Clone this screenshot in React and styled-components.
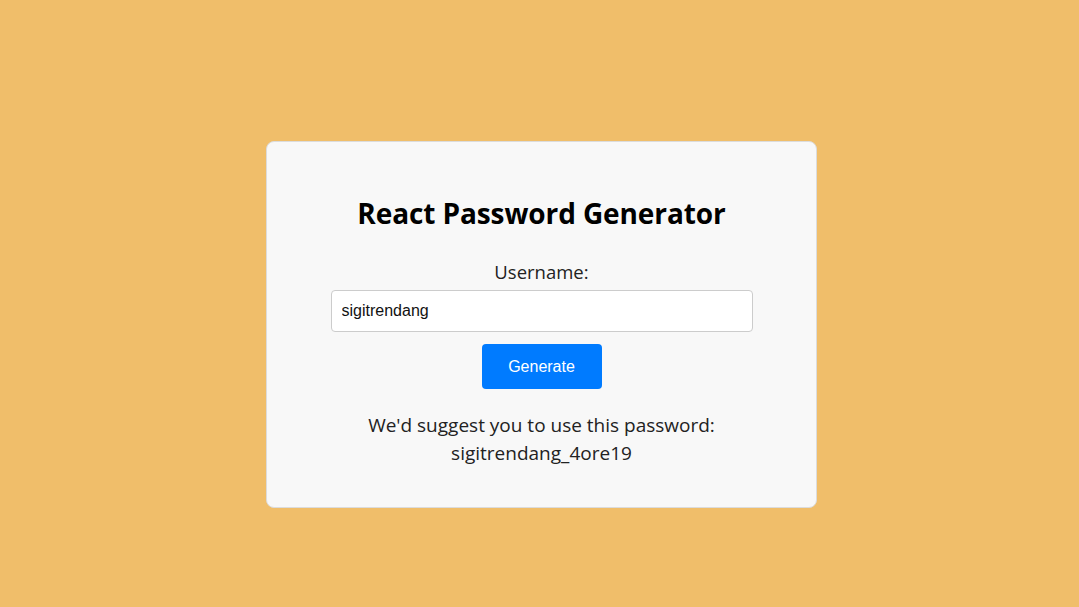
import styled, { createGlobalStyle } from "styled-components";

const GlobalStyle = createGlobalStyle`
  html, body {
    margin: 0;
    padding: 0;
    background: #f0be6a;
  }
  body {
    font-family: "Open Sans", "Noto Sans", sans-serif;
  }
`;

const Page = styled.div`
  box-sizing: border-box;
  width: 100%;
  height: 607px;
  padding: 141px 0 0 4px;
  display: flex;
  align-items: flex-start;
  justify-content: center;
  background: #f0be6a;
`;

const Card = styled.div`
  box-sizing: border-box;
  width: 551px;
  height: 367px;
  padding: 52px 40px 0;
  background: #f8f8f8;
  border: 1px solid #dcdcdc;
  border-radius: 8px;
  display: flex;
  flex-direction: column;
  align-items: center;
  text-align: center;
`;

const Title = styled.h1`
  margin: 0 0 28px;
  font-size: 28px;
  line-height: 38px;
  font-weight: 700;
  color: #000;
  letter-spacing: -0.1px;
`;

const Label = styled.label`
  font-size: 18.5px;
  line-height: 24px;
  color: #222;
  margin-bottom: 6px;
`;

const Input = styled.input`
  box-sizing: border-box;
  width: 422px;
  height: 42px;
  padding: 0 10px;
  border: 1px solid #ccc;
  border-radius: 4px;
  background: #fff;
  font-family: "Liberation Sans", Arial, sans-serif;
  font-size: 16px;
  color: #111;
  outline: none;
`;

const Button = styled.button`
  margin-top: 12px;
  width: 120px;
  height: 45px;
  border: none;
  border-radius: 4px;
  background: #007bff;
  color: #fff;
  font-family: "Liberation Sans", Arial, sans-serif;
  font-size: 16px;
  cursor: pointer;
`;

const Result = styled.p`
  margin: 22px 0 0;
  font-size: 19px;
  line-height: 28px;
  color: #222;
`;

export default function App() {
  return (
    <>
      <GlobalStyle />
      <Page>
        <Card>
          <Title>React Password Generator</Title>
          <Label htmlFor="username">Username:</Label>
          <Input id="username" defaultValue="sigitrendang" />
          <Button>Generate</Button>
          <Result>
            We'd suggest you to use this password:
            <br />
            sigitrendang_4ore19
          </Result>
        </Card>
      </Page>
    </>
  );
}
